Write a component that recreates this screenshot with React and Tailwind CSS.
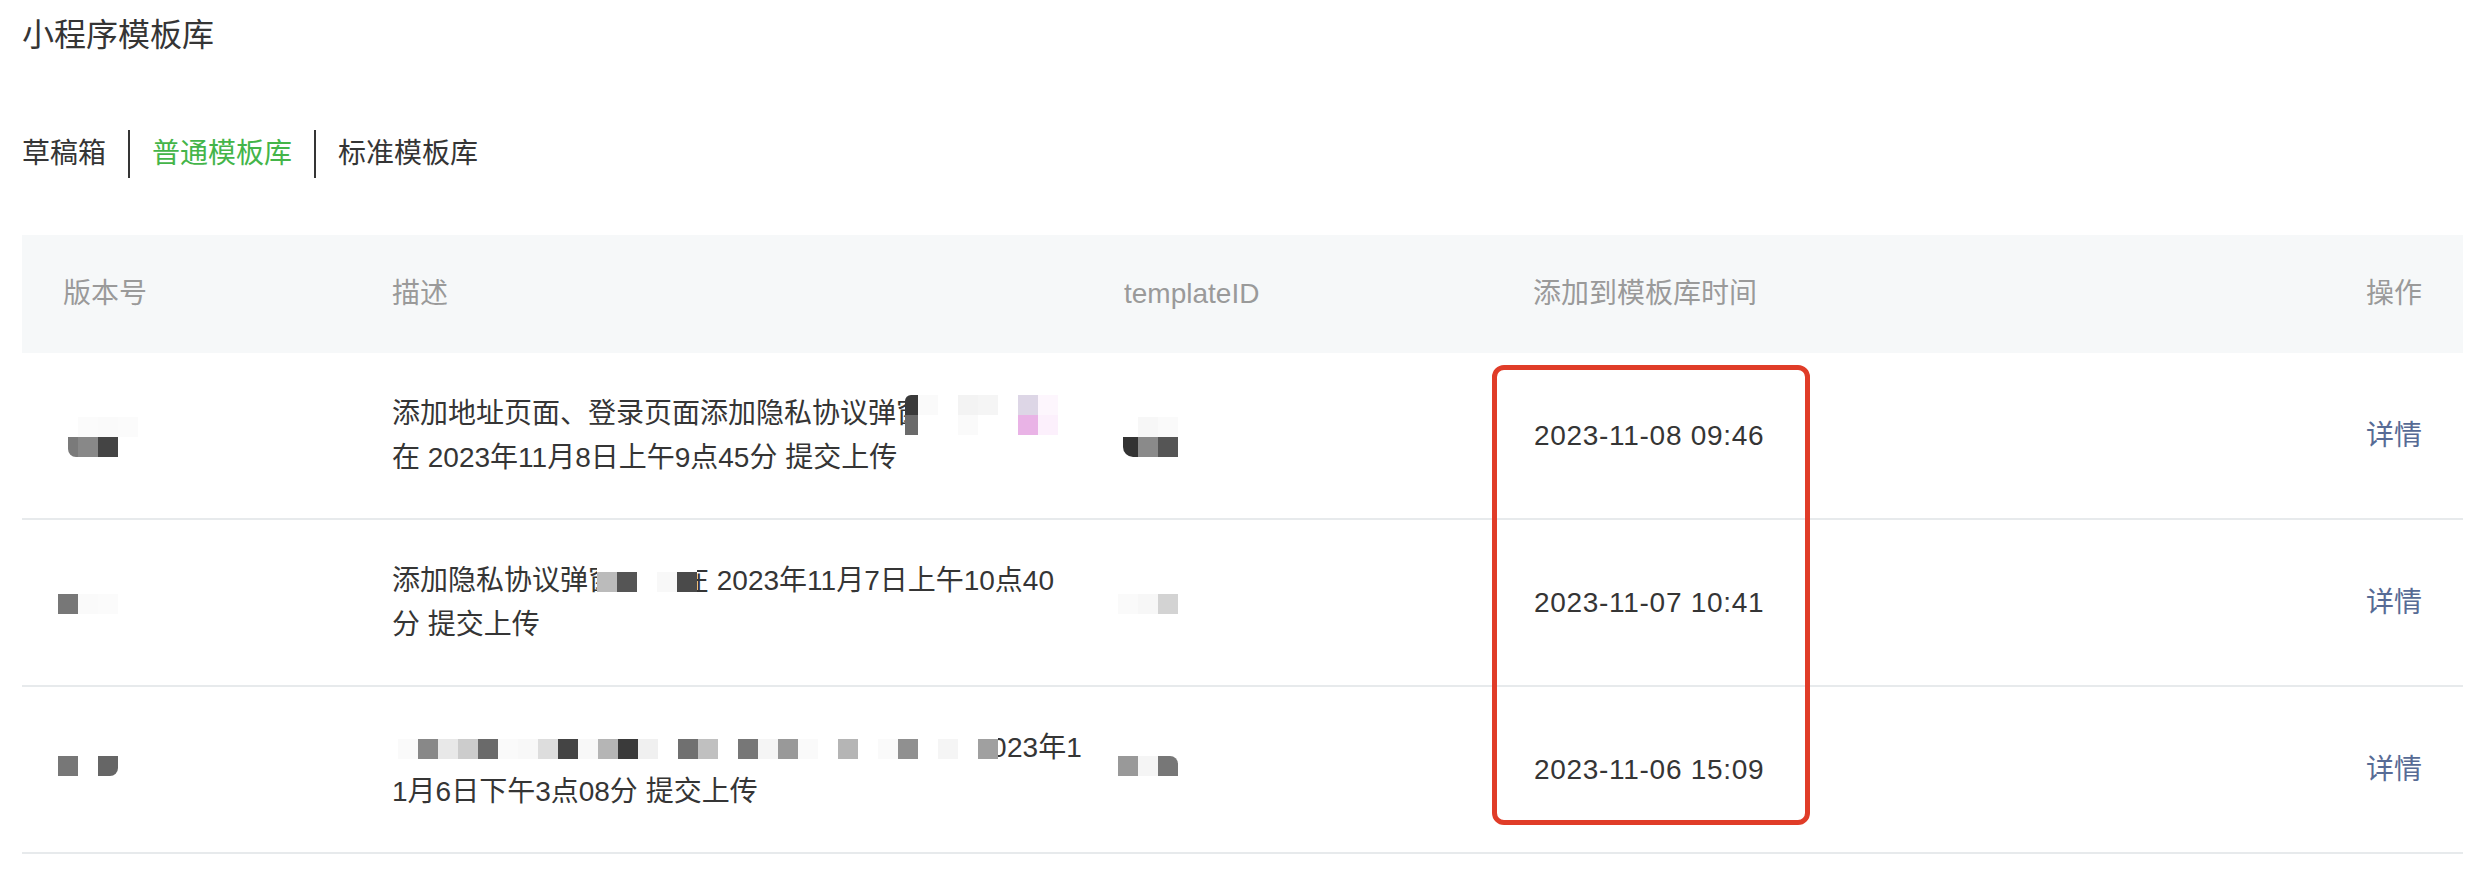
import React from 'react';

const FONT = { fontFamily: '"Liberation Sans", "Noto Sans CJK SC", sans-serif' };

// pixelated blocks that hide version / template ids in the screenshot
function Mosaic({ rows, cell = 20, className = '' }) {
  return (
    <span className={`inline-flex flex-col align-middle ${className}`}>
      {rows.map((row, i) => (
        <span key={i} className="flex">
          {row.map((c, j) => {
            const [color, w, round] = Array.isArray(c) ? c : [c, cell, ''];
            return (
              <span
                key={j}
                className={round || ''}
                style={{ backgroundColor: color, width: w, height: cell }}
              />
            );
          })}
        </span>
      ))}
    </span>
  );
}

const LeftHalf = ({ children }) => (
  <span className="inline-block h-[44px] w-[9px] overflow-hidden align-top whitespace-nowrap">
    {children}
  </span>
);

const RightHalf = ({ children, w = 'w-[12px]', shift = '-ml-[16px]' }) => (
  <span className={`inline-block h-[44px] overflow-hidden align-top whitespace-nowrap ${w}`}>
    <span className={`inline-block ${shift}`}>{children}</span>
  </span>
);

const rows = [
  {
    version: (
      <Mosaic
        className="-ml-[4px]"
        rows={[
          ['#ffffff', '#fbfbfb', '#fafafa', '#fbfbfb'],
          [['#ffffff', 10], ['#7a7a7a', 10, 'rounded-bl-[8px]'], '#888888', '#444444'],
        ]}
      />
    ),
    desc: (
      <>
        <div className="whitespace-nowrap">
          添加地址页面、登录页面添加隐私协议弹<LeftHalf>窗</LeftHalf>
          <Mosaic
            rows={[
              [['#3a3a3a', 13, 'rounded-tl-[6px]'], '#fafafa', '#ffffff', '#f3f3f3', '#f5f5f5', '#ffffff', '#ddd6e6', '#fdf6fd'],
              [['#6a6a6a', 13], '#ffffff', '#ffffff', '#fafafa', '#ffffff', '#ffffff', '#e9b3e6', '#fcf0fc'],
            ]}
          />
        </div>
        <div>在 2023年11月8日上午9点45分 提交上传</div>
      </>
    ),
    tid: (
      <Mosaic
        className="-ml-[6px]"
        rows={[
          ['#ffffff', '#f7f7f7', '#fafafa'],
          [['#ffffff', 5], ['#333333', 15, 'rounded-bl-[10px]'], '#8a8a8a', '#555555'],
        ]}
      />
    ),
    time: '2023-11-08 09:46',
  },
  {
    version: <Mosaic className="-ml-[4px]" rows={[['#777777', '#fafafa', '#fbfbfb']]} />,
    desc: (
      <>
        <div className="whitespace-nowrap">
          添加隐私协议弹<LeftHalf>窗</LeftHalf>
          <Mosaic rows={[['#bbbbbb', '#555555', '#ffffff', '#f8f8f8', '#4a4a4a']]} />
          <RightHalf>在</RightHalf> 2023年11月7日上午10点40
        </div>
        <div>分 提交上传</div>
      </>
    ),
    tid: <Mosaic className="-ml-[6px]" rows={[['#fafafa', '#f7f7f7', '#d3d3d3']]} />,
    time: '2023-11-07 10:41',
  },
  {
    version: (
      <Mosaic
        className="-ml-[4px] -mt-[10px]"
        rows={[['#777777', '#ffffff', ['#666666', 20, 'rounded-br-[8px]']]]}
      />
    ),
    desc: (
      <>
        <div className="whitespace-nowrap">
          <Mosaic
            className="ml-[6px]"
            rows={[[
              '#fafafa', '#888888', '#e8e8e8', '#cccccc', '#6a6a6a', '#fafafa', '#f8f8f8', '#dddddd',
              '#444444', '#f8f8f8', '#b5b5b5', '#3a3a3a', '#f0f0f0', '#ffffff', '#707070', '#c0c0c0',
              '#ffffff', '#777777', '#f5f5f5', '#999999', '#fafafa', '#ffffff', '#b5b5b5', '#ffffff',
              '#fafafa', '#909090', '#ffffff', '#f5f5f5', '#ffffff', '#a0a0a0',
            ]]}
          />
          <RightHalf w="w-[9px]" shift="-ml-[7px]">0</RightHalf>23年1
        </div>
        <div>1月6日下午3点08分 提交上传</div>
      </>
    ),
    tid: (
      <Mosaic
        className="-ml-[6px] -mt-[10px]"
        rows={[['#999999', '#f5f5f5', ['#777777', 20, 'rounded-tr-[8px]']]]}
      />
    ),
    time: '2023-11-06 15:09',
  },
];

const COLS = 'grid grid-cols-[330px_732px_409px_1fr_200px] items-center';

export default function App() {
  return (
    <div className="relative min-h-[872px] w-full bg-white pl-[22px] pr-[13px] text-[#353535]" style={FONT}>
      <h1 className="pt-[13px] text-[32px] font-normal leading-[44px]">小程序模板库</h1>

      <div className="mt-[73px] flex h-[48px] items-center text-[28px] leading-[44px]">
        <span>草稿箱</span>
        <span className="mx-[22px] h-[48px] w-[2px] bg-[#353535]" />
        <span className="text-[#44b549]">普通模板库</span>
        <span className="mx-[22px] h-[48px] w-[2px] bg-[#353535]" />
        <span>标准模板库</span>
      </div>

      <div className="mt-[57px] text-[28px] leading-[44px]">
        <div className={`${COLS} h-[118px] bg-[#f6f8f9] text-[#9a9a9a]`}>
          <div className="pl-[41px]">版本号</div>
          <div className="pl-[40px]">描述</div>
          <div className="pl-[40px]">templateID</div>
          <div className="pl-[40px]">添加到模板库时间</div>
          <div className="pr-[41px] text-right">操作</div>
        </div>

        {rows.map((r, i) => (
          <div key={i} className={`${COLS} h-[167px] border-b-2 border-[#e7eaec]`}>
            <div className="pl-[40px]">{r.version}</div>
            <div className="pl-[40px]">{r.desc}</div>
            <div className="pl-[40px]">{r.tid}</div>
            <div className="pl-[41px] tracking-[0.7px]">{r.time}</div>
            <div className="pr-[41px] text-right">
              <a className="text-[#576b95]">详情</a>
            </div>
          </div>
        ))}
      </div>

      {/* red annotation frame drawn over the time column */}
      <div className="pointer-events-none absolute left-[1492px] top-[365px] h-[460px] w-[318px] rounded-[12px] border-[5px] border-[#e03c28]" />
    </div>
  );
}
